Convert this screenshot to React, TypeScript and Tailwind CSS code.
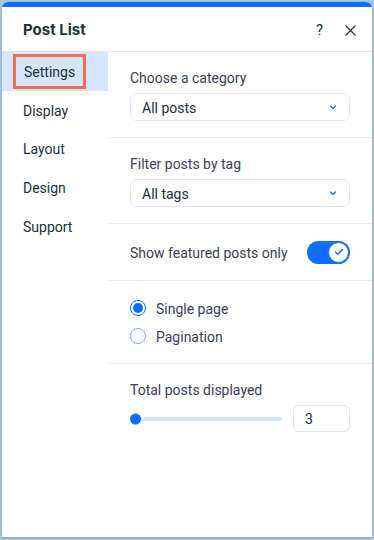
import React from "react";

const navItems = ["Settings", "Display", "Layout", "Design", "Support"];

function Chevron() {
  return (
    <svg width="10" height="10" viewBox="0 0 10 10" fill="none">
      <path d="M2.5 4l2.5 2.5L7.5 4" stroke="#116dff" strokeWidth="1.2" strokeLinecap="round" strokeLinejoin="round" />
    </svg>
  );
}

function Dropdown({ value }: { value: string }) {
  return (
    <div className="mt-[6px] h-[28px] w-[220px] rounded-[7px] border border-[#dde7fb] flex items-center justify-between pl-[11px] pr-[11px]">
      <span className="text-[14px] text-[#20303c] pt-[2px]">{value}</span>
      <Chevron />
    </div>
  );
}

export default function App() {
  return (
    <div
      className="w-[374px] h-[540px] bg-[#a9cade] p-[2px] pb-[3px]"
      style={{ fontFamily: "Roboto, 'Noto Sans', sans-serif" }}
    >
      <div className="h-[535px] w-[370px] bg-white rounded-t-[6px] overflow-hidden flex flex-col shadow-[0_1px_3px_rgba(0,0,0,0.25)]">
        {/* top accent */}
        <div className="h-[5px] bg-[#116dff]" />

        {/* header */}
        <div className="h-[45px] flex items-center justify-between pl-[21px] pr-[16px] border-b border-[#e3e8ee]">
          <span className="text-[15px] font-bold text-[#20303c] pt-[2px]" style={{ fontFamily: "Inter, sans-serif" }}>
            Post List
          </span>
          <div className="flex items-center gap-[22px] text-[#20303c] pt-[2px]">
            <span className="text-[15px] leading-none">?</span>
            <svg width="11" height="11" viewBox="0 0 11 11" fill="none">
              <path d="M1 1l9 9M10 1l-9 9" stroke="#20303c" strokeWidth="1.2" strokeLinecap="round" />
            </svg>
          </div>
        </div>

        <div className="flex flex-1">
          {/* sidebar */}
          <div className="w-[106px] flex flex-col">
            {navItems.map((item, i) => (
              <div
                key={item}
                className={`h-[38.6px] flex items-center pl-[21px] text-[14px] text-[#20303c] ${i === 0 ? "bg-[#d6e6fe]" : "pt-[3px]"}`}
              >
                {i === 0 ? (
                  <span className="-ml-[10px] px-[8px] pt-[2px] h-[35px] flex items-center border-[3px] border-[#f76c50]">
                    {item}
                  </span>
                ) : (
                  item
                )}
              </div>
            ))}
          </div>

          {/* content */}
          <div className="flex-1 flex flex-col">
            <div className="pl-[22px] pt-[15px] pb-[16px] border-b border-[#e6ecf3]">
              <div className="h-[20px] flex items-center pt-[2px] text-[14px] text-[#3b4057]">Choose a category</div>
              <Dropdown value="All posts" />
            </div>

            <div className="pl-[22px] pt-[15px] pb-[16px] border-b border-[#e6ecf3]">
              <div className="h-[20px] flex items-center pt-[2px] text-[14px] text-[#3b4057]">Filter posts by tag</div>
              <Dropdown value="All tags" />
            </div>

            <div className="pl-[22px] pr-[22px] h-[57px] flex items-center justify-between border-b border-[#e6ecf3]">
              <span className="text-[14px] text-[#3b4057] pt-[2px]">Show featured posts only</span>
              <div className="w-[43px] h-[23px] rounded-full bg-[#116dff] flex items-center justify-end pr-[1px]">
                <div className="w-[21px] h-[21px] rounded-full bg-white border border-[#116dff] flex items-center justify-center">
                  <svg width="10" height="8" viewBox="0 0 10 8" fill="none">
                    <path d="M1.5 4l2.3 2.2L8.5 1.5" stroke="#116dff" strokeWidth="1.5" strokeLinecap="round" strokeLinejoin="round" />
                  </svg>
                </div>
              </div>
            </div>

            <div className="pl-[22px] pt-[17px] pb-[17px] flex flex-col gap-[8px] border-b border-[#e6ecf3]">
              <div className="h-[20px] flex items-center gap-[10px]">
                <div className="w-[16px] h-[16px] rounded-full border border-[#116dff] flex items-center justify-center">
                  <div className="w-[10px] h-[10px] rounded-full bg-[#116dff]" />
                </div>
                <span className="text-[14px] text-[#3b4057] pt-[2px]">Single page</span>
              </div>
              <div className="h-[20px] flex items-center gap-[10px]">
                <div className="w-[16px] h-[16px] rounded-full border border-[#7fa9ff]" />
                <span className="text-[14px] text-[#3b4057] pt-[2px]">Pagination</span>
              </div>
            </div>

            <div className="pl-[22px] pt-[15px]">
              <div className="h-[20px] flex items-center pt-[2px] text-[14px] text-[#3b4057]">Total posts displayed</div>
              <div className="mt-[6px] flex items-center">
                <div className="relative w-[152px] h-[4px] rounded-full bg-[#d6e6fe]">
                  <div className="absolute left-0 top-1/2 -translate-y-1/2 w-[11px] h-[11px] rounded-full bg-[#116dff]" />
                </div>
                <div className="ml-[11px] w-[57px] h-[27px] rounded-[6px] border border-[#dde7fb] flex items-center pl-[11px] pt-[2px] text-[14px] text-[#20303c]">
                  3
                </div>
              </div>
            </div>
          </div>
        </div>
      </div>
    </div>
  );
}
